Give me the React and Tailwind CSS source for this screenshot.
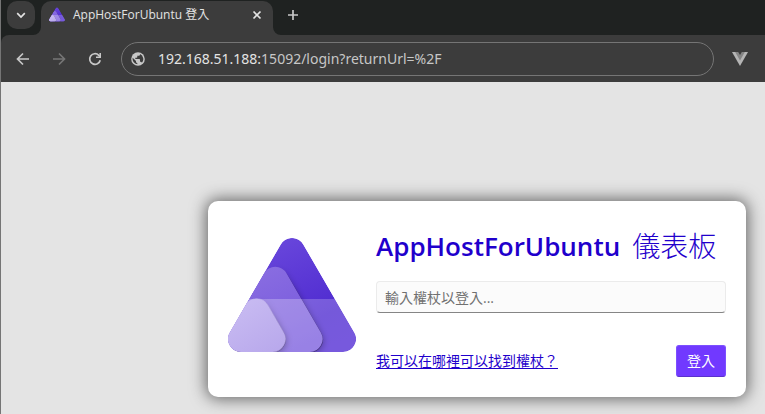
import React from "react";

function AspireLogo({ id, className }) {
  const big = "M13 114H115A13 13 0 0 0 126.3 94.5L75.3 6.5A13 13 0 0 0 52.7 6.5L1.7 94.5A13 13 0 0 0 13 114Z";
  const mid = "M13 114H81.5A13 13 0 0 0 92.8 94.5L58.5 35.2A13 13 0 0 0 36 35.2L1.7 94.5A13 13 0 0 0 13 114Z";
  const small = "M13 114H44.3A13 13 0 0 0 55.6 94.5L40 67.4A13 13 0 0 0 17.4 67.4L1.7 94.5A13 13 0 0 0 13 114Z";
  const u = (name) => `url(#${id}-${name})`;
  return (
    <svg className={className} viewBox="0 -3 128 128" aria-hidden="true">
      <defs>
        <linearGradient id={`${id}-a`} gradientUnits="userSpaceOnUse" x1="40" y1="0" x2="90" y2="114">
          <stop offset="0" stopColor="#6a48dc" />
          <stop offset="0.75" stopColor="#4f2bd0" />
          <stop offset="1" stopColor="#512bd4" />
        </linearGradient>
        <linearGradient id={`${id}-b`} gradientUnits="userSpaceOnUse" x1="30" y1="28" x2="70" y2="114">
          <stop offset="0" stopColor="#8a6ee1" />
          <stop offset="1" stopColor="#7455dc" />
        </linearGradient>
        <linearGradient id={`${id}-c`} gradientUnits="userSpaceOnUse" x1="10" y1="61" x2="44" y2="114">
          <stop offset="0" stopColor="#c9bcf2" />
          <stop offset="1" stopColor="#b9a9ec" />
        </linearGradient>
        <linearGradient id={`${id}-fade`} gradientUnits="userSpaceOnUse" x1="10" y1="80" x2="40" y2="97">
          <stop offset="0" stopColor="#000" stopOpacity="0" />
          <stop offset="1" stopColor="#000" stopOpacity="1" />
        </linearGradient>
        <clipPath id={`${id}-clip`}><path d={big} /></clipPath>
        <clipPath id={`${id}-low`}><path d="M0 61H128V114H0Z" /></clipPath>
        <filter id={`${id}-blur`} x="-20%" y="-20%" width="140%" height="140%">
          <feGaussianBlur stdDeviation="3" />
        </filter>
        <filter id={`${id}-edge`} x="-20%" y="-20%" width="140%" height="140%">
          <feGaussianBlur stdDeviation="0.6" />
        </filter>
      </defs>
      <g clipPath={u("clip")}>
        <path d={big} fill={u("a")} />
        <path d="M0 61H128V114H0Z" fill="#fff" fillOpacity="0.22" />
        <path d={mid} fill={u("fade")} fillOpacity="0.28" filter={u("blur")} transform="translate(1 2)" />
        <path d={mid} fill={u("fade")} fillOpacity="0.3" filter={u("edge")} transform="translate(0.5 0.5)" />
        <path d={mid} fill={u("b")} />
        <path d={mid} fill="#fff" fillOpacity="0.26" clipPath={u("low")} />
        <path d={small} fill={u("fade")} fillOpacity="0.28" filter={u("blur")} transform="translate(1 2)" />
        <path d={small} fill={u("fade")} fillOpacity="0.3" filter={u("edge")} transform="translate(0.5 0.5)" />
        <path d={small} fill={u("c")} stroke={u("c")} strokeWidth="0.6" />
      </g>
    </svg>
  );
}

function Icon({ d, className }) {
  return (
    <svg className={className} viewBox="0 0 16 16" fill="none" stroke="currentColor" strokeWidth="1.7" aria-hidden="true">
      <path d={d} />
    </svg>
  );
}

function TabStrip() {
  return (
    <div className="flex h-[35px] items-start bg-[#1f2221] pl-1.5">
      <button aria-label="搜尋分頁" className="mt-px flex h-7 w-7 items-center justify-center rounded-[10px] bg-[#3c3c3c] text-[#e3e3e3]">
        <Icon className="h-4 w-4" d="M4.2 6.2L8 10L11.8 6.2" />
      </button>
      <div className="relative ml-1.5 mt-px flex h-[34px] w-[232px] items-start rounded-t-[10px] bg-[#3c3c3c] pl-2 pr-2 text-[#e3e3e3]">
        <svg className="absolute -left-2 bottom-0 h-2 w-2" viewBox="0 0 8 8" aria-hidden="true"><path d="M0 8A8 8 0 0 0 8 0V8Z" fill="#3c3c3c" /></svg>
        <svg className="absolute -right-2 bottom-0 h-2 w-2" viewBox="0 0 8 8" aria-hidden="true"><path d="M8 8A8 8 0 0 1 0 0V8Z" fill="#3c3c3c" /></svg>
        <AspireLogo id="tab" className="mt-1.5 h-4 w-4" />
        <span className="ml-2 flex-1 text-xs leading-7">AppHostForUbuntu 登入</span>
        <button aria-label="關閉分頁" className="flex h-7 w-4 items-center justify-center">
          <Icon className="h-4 w-4" d="M4.5 4.5L11.5 11.5M11.5 4.5L4.5 11.5" />
        </button>
      </div>
      <button aria-label="新增分頁" className="ml-3 mt-px flex h-7 w-4 items-center justify-center text-[#c7c7c7]">
        <Icon className="h-4 w-4" d="M8 3V13M3 8H13" />
      </button>
    </div>
  );
}

function Toolbar() {
  return (
    <div className="flex h-[47px] items-center bg-[#3c3c3c] pl-[14px] pr-[17px]">
      <button aria-label="返回" className="text-[#c7c7c7]">
        <Icon className="h-4 w-4" d="M14 8H3M8 2.5L2.5 8L8 13.5" />
      </button>
      <button aria-label="前進" className="ml-5 text-[#757575]">
        <Icon className="h-4 w-4" d="M2 8H13M8 2.5L13.5 8L8 13.5" />
      </button>
      <button aria-label="重新載入" className="ml-5 text-[#c7c7c7]">
        <svg className="h-4 w-4" viewBox="0 0 16 16" fill="none" aria-hidden="true">
          <path d="M13.2 9.2A5.3 5.3 0 1 1 11.8 4.3L13 5.5" stroke="currentColor" strokeWidth="1.7" />
          <path d="M14 2V7H9V5.4H12.4V2Z" fill="currentColor" />
        </svg>
      </button>
      <div className="ml-[18px] flex h-[34px] flex-1 items-center rounded-full border border-[#757575] pl-2 text-sm text-[#c7c7c7]">
        <svg className="h-4 w-4 shrink-0" viewBox="0 0 16 16" aria-hidden="true">
          <circle cx="8" cy="8" r="6.8" fill="#c7c7c7" />
          <path d="M7.3 13.3A5.4 5.4 0 0 1 2.7 6.8L6 10.1V10.8A1.3 1.3 0 0 0 7.3 12.1ZM11.9 11.7A1.3 1.3 0 0 0 10.7 10.8H10V8.8A.7.7 0 0 0 9.3 8.1H5.3V6.8H6.6A.7.7 0 0 0 7.3 6.1V4.8H8.6A1.3 1.3 0 0 0 10 3.5V3.1A5.4 5.4 0 0 1 11.9 11.7Z" fill="#3c3c3c" />
        </svg>
        <div className="ml-3 font-['Noto_Sans']"><span className="text-[#e3e3e3]">192.168.51.188:</span>15092/login?returnUrl=%2F</div>
      </div>
      <button aria-label="Vue.js devtools" className="ml-[18px]">
        <svg className="h-4 w-4" viewBox="0 0 16 16" aria-hidden="true">
          <path d="M0 1H16L8 15Z" fill="#b5b5b5" />
          <path d="M3.2 1H12.8L8 9.4Z" fill="#858585" />
          <path d="M6.2 1H9.8L8 4Z" fill="#3c3c3c" />
        </svg>
      </button>
    </div>
  );
}

function LoginCard() {
  return (
    <form className="flex items-center gap-5 rounded-[10px] bg-white p-5 shadow-[0_0_16px_2px_#666]" onSubmit={(e) => e.preventDefault()}>
      <AspireLogo id="card" className="h-32 w-32 shrink-0" />
      <div className="min-w-0 flex-1">
        <h1 className="flex gap-3 whitespace-nowrap text-[26px] font-semibold leading-[50px] text-[#1f00cc]">
          <span>AppHostForUbuntu</span> <span className="text-[28px] font-light">儀表板</span>
        </h1>
        <input
          type="password"
          aria-label="權杖"
          placeholder="輸入權杖以登入..."
          className="mt-2.5 block h-8 w-full rounded border border-[#ebebeb] border-b-[#858585] bg-[#fbfbfb] px-2 text-sm placeholder:text-[#707070]"
        />
        <div className="mt-8 flex items-center justify-between">
          <a href="#help" className="text-sm text-[#1f00cc] underline underline-offset-2">我可以在哪裡可以找到權杖？</a>
          <button className="h-8 rounded-[3px] border border-[#7c50ff] border-b-[#5a32cc] bg-[#7139ff] px-2.5 text-sm text-white">登入</button>
        </div>
      </div>
    </form>
  );
}

export default function App() {
  return (
    <div className="flex min-h-screen flex-col bg-[#e4e4e4] font-['Open_Sans','Noto_Sans_CJK_TC',sans-serif]">
      <div className="border-l border-[#757575] bg-[#1f2221]">
        <TabStrip />
        <div className="overflow-hidden rounded-tl-lg"><Toolbar /></div>
      </div>
      <main className="flex-1 border-l border-[#757575] pb-4 pl-[207px] pr-[19px] pt-[119px]">
        <LoginCard />
      </main>
    </div>
  );
}
